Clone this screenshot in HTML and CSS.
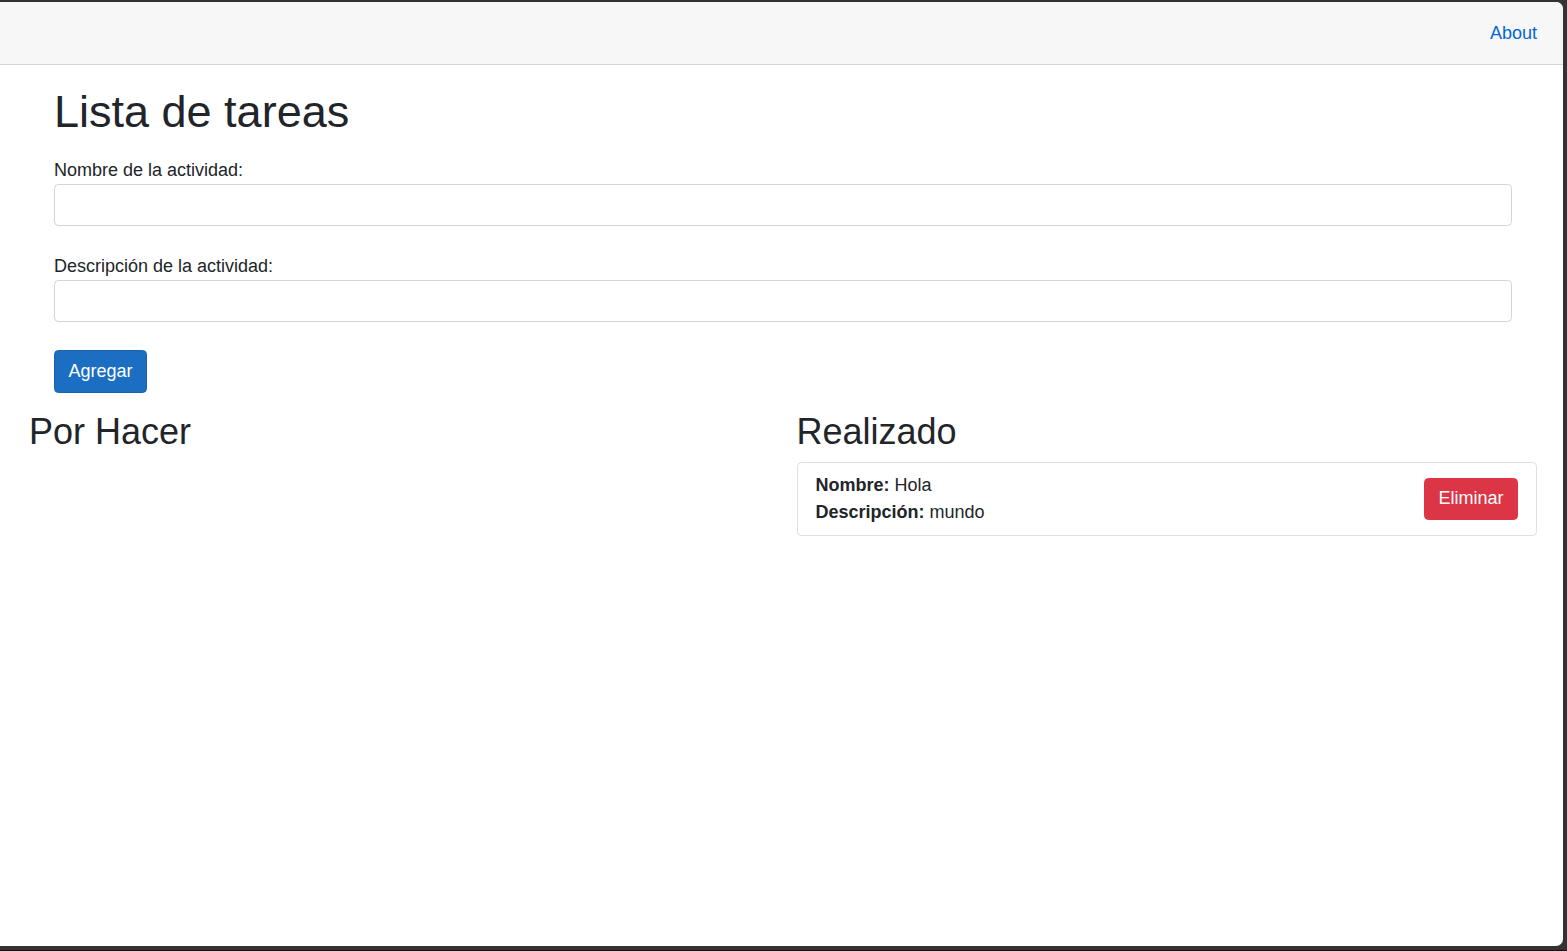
FILE: index.html
```html
<!DOCTYPE html>
<html lang="es">
<head>
<meta charset="utf-8">
<title>Lista de tareas</title>
<link rel="stylesheet" href="styles.css">
</head>
<body>
<div class="window">
  <div class="top-row">
    <a class="about" href="#">About</a>
  </div>
  <main class="content">
    <div class="form-wrap">
      <h1 class="title">Lista de tareas</h1>
      <form class="task-form">
        <div class="form-group">
          <label class="form-label">Nombre de la actividad:</label>
          <input class="form-control" type="text">
        </div>
        <div class="form-group">
          <label class="form-label">Descripción de la actividad:</label>
          <input class="form-control" type="text">
        </div>
        <button class="btn btn-primary" type="button">Agregar</button>
      </form>
    </div>
    <div class="columns">
      <section class="column">
        <h2 class="col-title">Por Hacer</h2>
      </section>
      <section class="column">
        <h2 class="col-title">Realizado</h2>
        <div class="task-card">
          <div class="task-text">
            <div><strong>Nombre:</strong> Hola</div>
            <div><strong>Descripción:</strong> mundo</div>
          </div>
          <button class="btn btn-danger" type="button">Eliminar</button>
        </div>
      </section>
    </div>
  </main>
</div>
</body>
</html>
```

FILE: styles.css
```css
* {
  box-sizing: border-box;
}

html, body {
  margin: 0;
  padding: 0;
}

body {
  background: #333333;
  padding: 2px 4px 5px 0;
  border-bottom: 1px solid #151515;
  font-family: "Liberation Sans", Arial, Helvetica, sans-serif;
  font-size: 18px;
  line-height: 1.5;
  color: #212529;
  height: 951px;
  overflow: hidden;
}

.window {
  background: #ffffff;
  height: 944px;
  border-top-right-radius: 7px;
  border-bottom-right-radius: 7px;
  overflow: hidden;
}

.top-row {
  height: 63px;
  background: #f7f7f7;
  border-bottom: 1px solid #d6d5d5;
  display: flex;
  align-items: center;
  justify-content: flex-end;
  padding-right: 26px;
}

.about {
  color: #0366d6;
  text-decoration: none;
  white-space: nowrap;
}

.content {
  padding: 19.8px 26px 0 29px;
}

.form-wrap {
  margin: 0 25px 0 25px;
}

.title {
  font-size: 45px;
  font-weight: normal;
  line-height: 1.2;
  margin: 0 0 18px 0;
}

.form-group {
  margin-bottom: 26.5px;
}

.form-label {
  display: block;
  line-height: 27px;
}

.form-control {
  display: block;
  width: 100%;
  height: 42.5px;
  padding: 6.75px 13.5px;
  font-family: inherit;
  font-size: 18px;
  line-height: 1.5;
  color: #495057;
  background: #fff;
  border: 1px solid #ced4da;
  border-radius: 4.5px;
}

.btn {
  display: inline-block;
  font-family: inherit;
  font-size: 18px;
  line-height: 1.5;
  padding: 6.75px 13.5px;
  border: 1px solid transparent;
  border-radius: 4.5px;
  color: #fff;
  cursor: pointer;
}

.task-form .btn {
  margin-top: 1.5px;
}

.btn-primary {
  background: #1b6ec2;
  border-color: #1861ac;
}

.btn-danger {
  background: #dc3545;
  border-color: #dc3545;
}

.columns {
  display: grid;
  grid-template-columns: 1fr 1fr;
  column-gap: 27px;
  margin-top: 17px;
}

.col-title {
  font-size: 36px;
  font-weight: normal;
  line-height: 1.2;
  margin: 0 0 9px 0;
}

.task-card {
  display: flex;
  align-items: center;
  justify-content: space-between;
  border: 1px solid #dfdfdf;
  border-radius: 4.5px;
  padding: 9px 18px 9px 18px;
}

.task-text strong {
  font-weight: bold;
}
```
